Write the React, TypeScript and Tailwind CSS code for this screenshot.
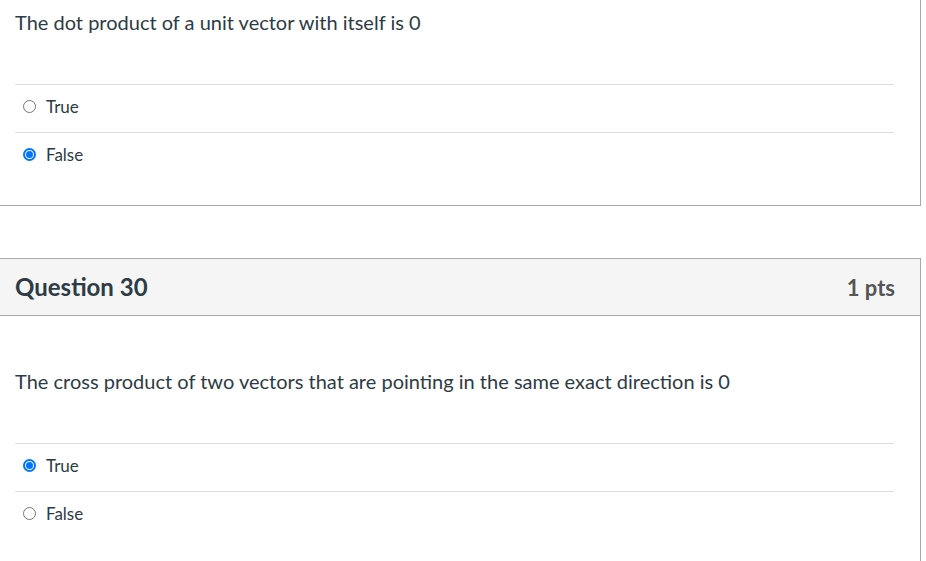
type Answer = { label: string; checked: boolean }

function Option({ a, name }: { a: Answer; name: string }) {
  return (
    <label className="flex items-center h-[48px] pb-[4px] border-t border-[#dcdcdc] text-[17px] text-[#2d3b45]">
      <span
        className={
          a.checked
            ? 'ml-[8px] w-[13px] h-[13px] rounded-full border-2 border-[#0075ff] flex items-center justify-center'
            : 'ml-[8px] w-[13px] h-[13px] rounded-full border border-[#767676]'
        }
      >
        {a.checked && <span className="w-[7px] h-[7px] rounded-full bg-[#0075ff]" />}
      </span>
      <input type="radio" name={name} defaultChecked={a.checked} className="hidden" />
      <span className="ml-[10px]">{a.label}</span>
    </label>
  )
}

function Answers({ items, name }: { items: Answer[]; name: string }) {
  return (
    <div className="mt-[48px] mr-[26px]">
      {items.map((a) => (
        <Option key={a.label} a={a} name={name} />
      ))}
    </div>
  )
}

export default function App() {
  return (
    <div className="w-[926px] h-[561px] overflow-hidden bg-white font-['Lato','Noto_Sans',sans-serif]">
      <section className="w-[922px] -ml-px border border-t-0 border-[#a8a8a8] pl-[15px] pt-[8px] pb-[25px]">
        <p className="text-[20px] leading-[28px] text-[#2d3b45]">The dot product of a unit vector with itself is 0</p>
        <Answers
          name="q29"
          items={[
            { label: 'True', checked: false },
            { label: 'False', checked: true },
          ]}
        />
      </section>

      <section className="w-[922px] -ml-px mt-[52px] border border-[#a8a8a8]">
        <header className="flex items-center justify-between h-[57px] bg-[#f5f5f5] border-b border-[#a8a8a8] pl-[15px] pr-[25px]">
          <h2 className="text-[24px] font-bold text-[#2d3b45]">Question 30</h2>
          <span className="text-[22px] font-bold text-[#555]">1 pts</span>
        </header>
        <div className="pl-[15px] pt-[51px] pb-[25px]">
          <p className="text-[20px] leading-[28px] text-[#2d3b45]">
            The cross product of two vectors that are pointing in the same exact direction is 0
          </p>
          <Answers
            name="q30"
            items={[
              { label: 'True', checked: true },
              { label: 'False', checked: false },
            ]}
          />
        </div>
      </section>
    </div>
  )
}
